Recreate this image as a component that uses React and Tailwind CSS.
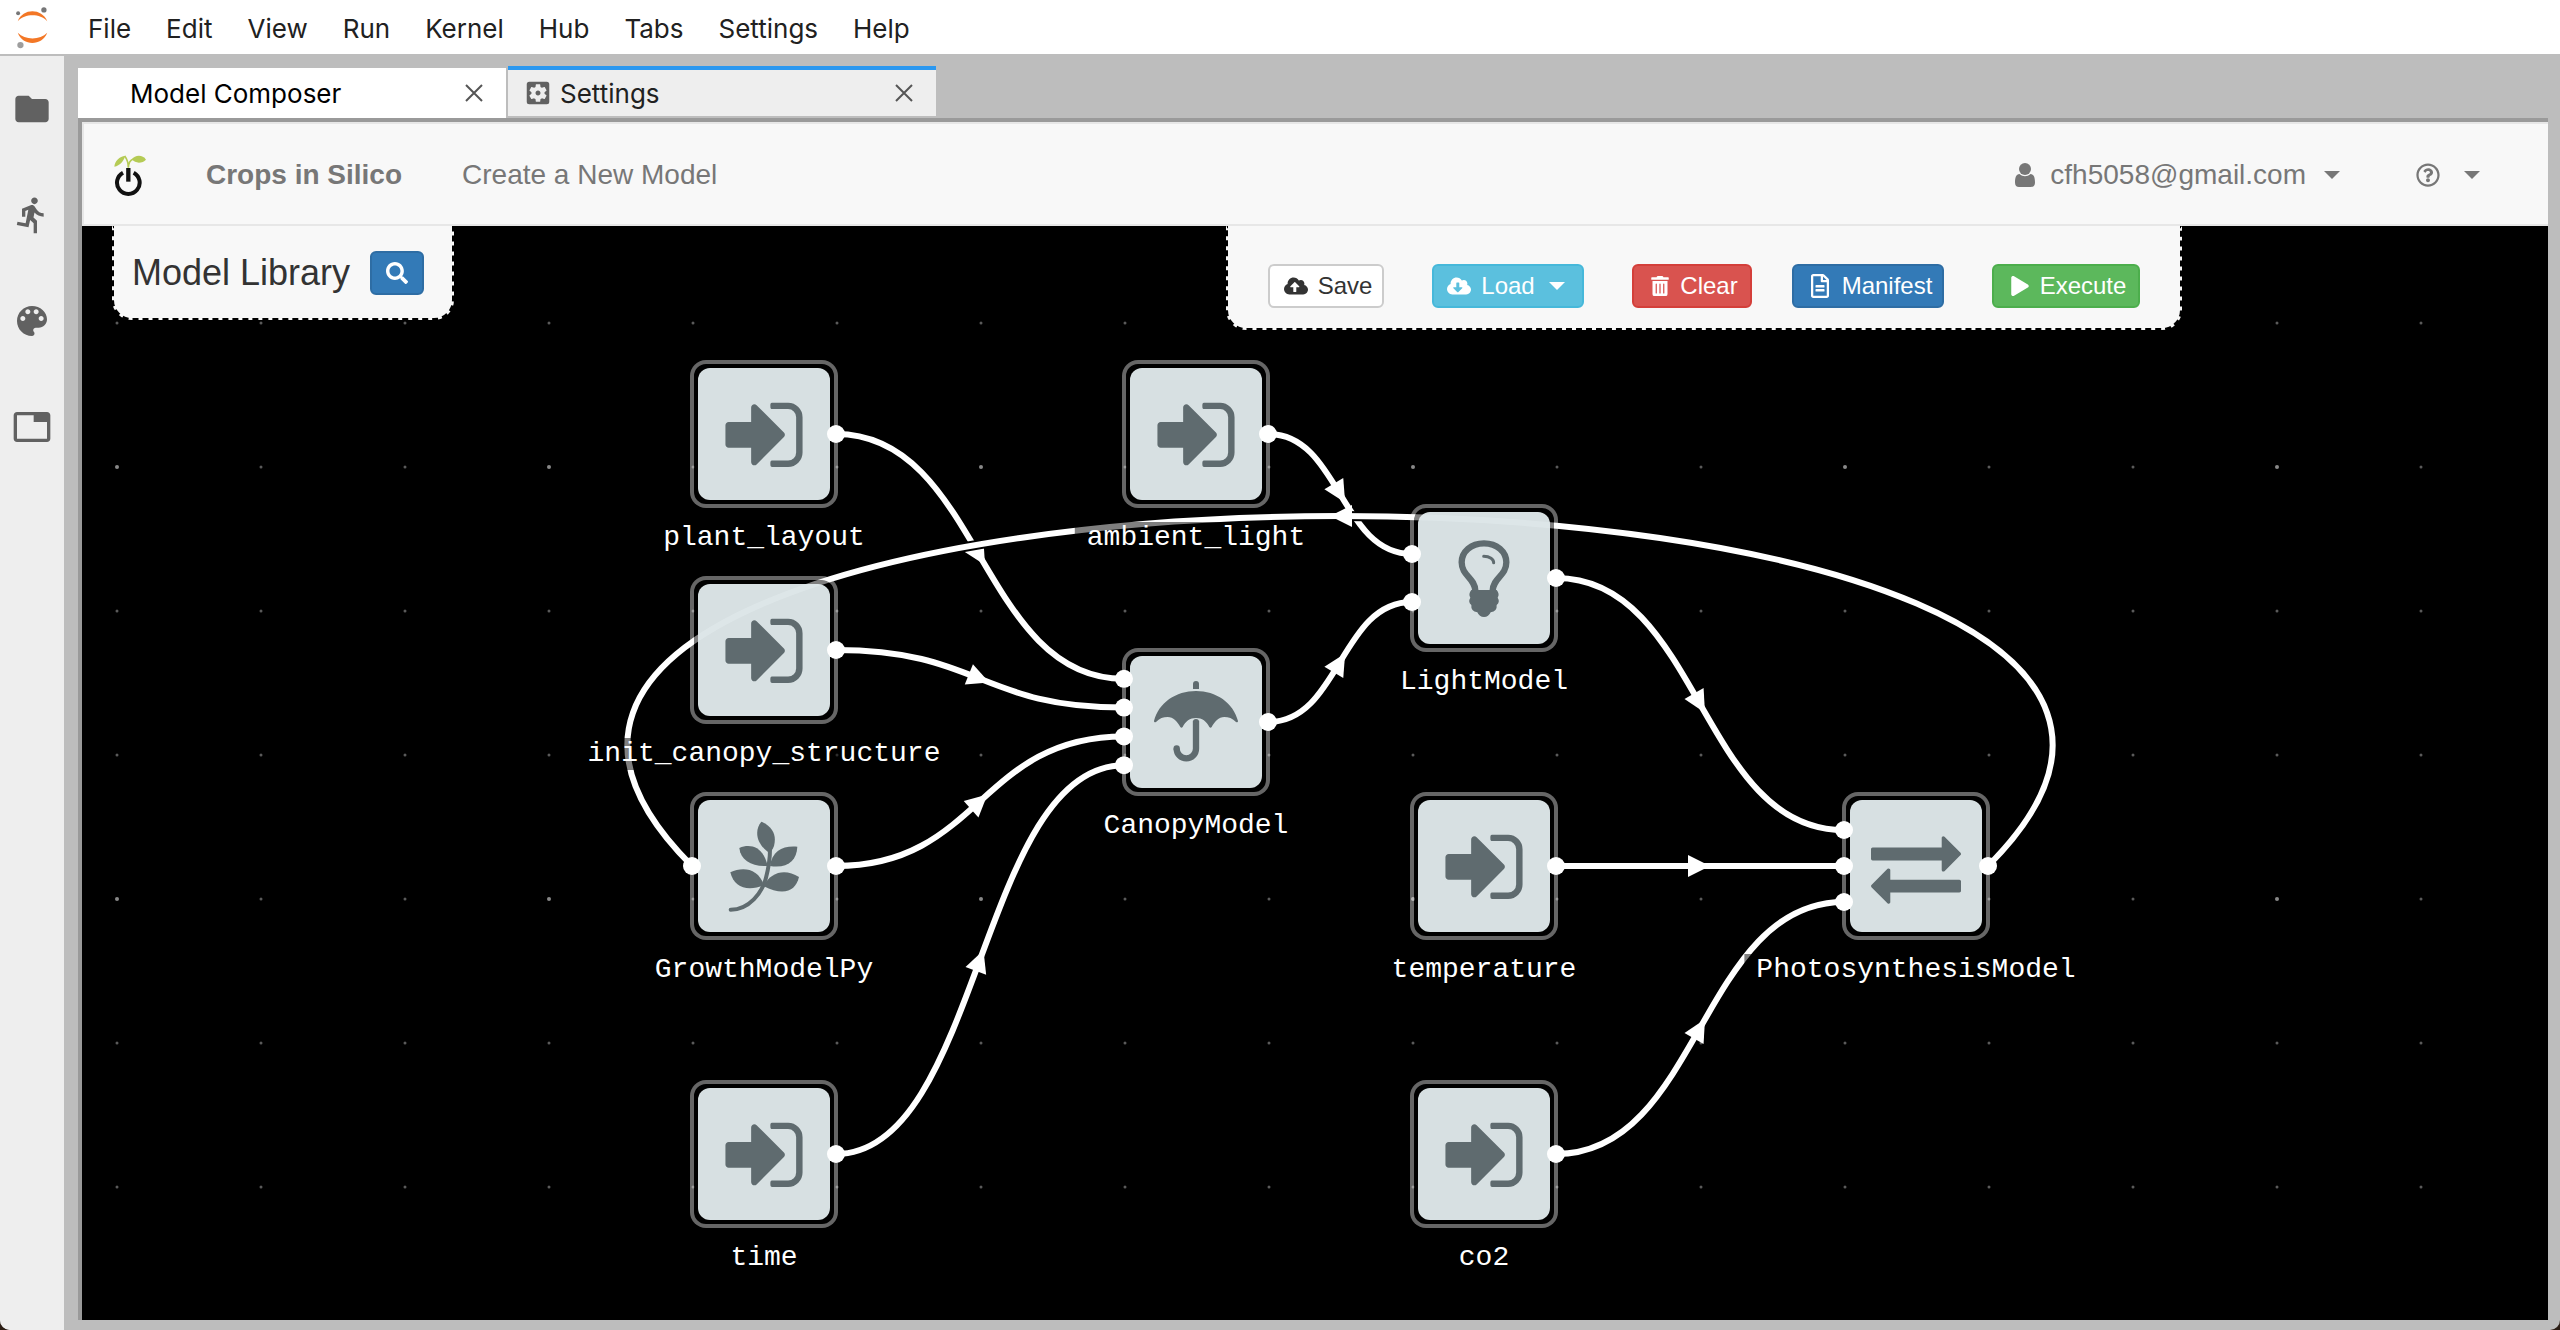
import React from "react";
import {
  FaCloudUploadAlt,
  FaCloudDownloadAlt,
  FaTrashAlt,
  FaRegFileAlt,
  FaPlay,
  FaSearch,
  FaRegQuestionCircle,
} from "react-icons/fa";
import { MdFolder, MdDirectionsRun, MdTab, MdSettingsApplications } from "react-icons/md";

const MENUS = ["File", "Edit", "View", "Run", "Kernel", "Hub", "Tabs", "Settings", "Help"];

const NODE = 144;

/* Top-left corner of each node on the canvas */
const NODES = [
  { id: "plant_layout", icon: "input", x: 610, y: 136, inputs: 0 },
  { id: "ambient_light", icon: "input", x: 1042, y: 136, inputs: 0 },
  { id: "init_canopy_structure", icon: "input", x: 610, y: 352, inputs: 0 },
  { id: "GrowthModelPy", icon: "leaf", x: 610, y: 568, inputs: 1 },
  { id: "time", icon: "input", x: 610, y: 856, inputs: 0 },
  { id: "CanopyModel", icon: "umbrella", x: 1042, y: 424, inputs: 4 },
  { id: "LightModel", icon: "bulb", x: 1330, y: 280, inputs: 2 },
  { id: "temperature", icon: "input", x: 1330, y: 568, inputs: 0 },
  { id: "co2", icon: "input", x: 1330, y: 856, inputs: 0 },
  { id: "PhotosynthesisModel", icon: "exchange", x: 1762, y: 568, inputs: 3 },
];

const EDGES = [
  ["plant_layout", "CanopyModel", 1],
  ["init_canopy_structure", "CanopyModel", 2],
  ["GrowthModelPy", "CanopyModel", 3],
  ["time", "CanopyModel", 4],
  ["ambient_light", "LightModel", 1],
  ["CanopyModel", "LightModel", 2],
  ["LightModel", "PhotosynthesisModel", 1],
  ["temperature", "PhotosynthesisModel", 2],
  ["co2", "PhotosynthesisModel", 3],
  ["PhotosynthesisModel", "GrowthModelPy", 1],
];

const byId = Object.fromEntries(NODES.map((n) => [n.id, n]));

function Edge({ from, to, port }) {
  const a = byId[from];
  const b = byId[to];
  const sx = a.x + NODE;
  const sy = a.y + NODE / 2;
  const tx = b.x;
  const ty = b.y + (NODE * port) / (b.inputs + 1);
  let c1 = [(sx + tx) / 2, sy];
  let c2 = [(sx + tx) / 2, ty];
  if (tx < sx) {
    const k = (sx - tx) * 0.36;
    c1 = [sx + k, sy - k];
    c2 = [tx - k, ty - k];
  }
  const mx = (sx + 3 * c1[0] + 3 * c2[0] + tx) / 8;
  const my = (sy + 3 * c1[1] + 3 * c2[1] + ty) / 8;
  const angle = (Math.atan2(ty + c2[1] - c1[1] - sy, tx + c2[0] - c1[0] - sx) * 180) / Math.PI;
  const d = `M${sx} ${sy}C${c1[0]} ${c1[1]} ${c2[0]} ${c2[1]} ${tx} ${ty}`;
  return (
    <g>
      <path d={d} fill="none" stroke="#000" strokeWidth="10" />
      <path d={d} fill="none" stroke="#fff" strokeWidth="6" />
      <path d="M-12 -11L10 0L-12 11Z" fill="#fff" transform={`translate(${mx} ${my}) rotate(${angle})`} />
    </g>
  );
}

function NodeIcon({ kind }) {
  if (kind === "leaf") {
    return (
      <svg viewBox="24 24 432 432" className="h-full w-full" fill="#5f6b6f">
        <path d="M140 371C195 371 235 320 246 275C254 245 258 220 258 190" fill="none" stroke="#5f6b6f" strokeWidth="12" strokeLinecap="round" />
        <path d="M232 107C213 128 213 170 251 197Q263 200 270 180C278 150 268 122 232 107Z" />
        <path d="M166 186C200 172 238 182 251 240C205 242 170 225 166 186Z" />
        <path d="M340 182C298 178 264 194 258 240C310 248 338 225 340 182Z" />
        <path d="M139 259C175 242 222 245 240 298C190 318 150 305 139 259Z" />
        <path d="M345 273C305 248 262 256 238 300C300 332 335 315 345 273Z" />
      </svg>
    );
  }
  if (kind === "umbrella") {
    return (
      <svg viewBox="24 24 432 432" className="h-full w-full" fill="#5f6b6f">
        <path d="M231 141V126A9 9 0 0 1 249 126V141Z" />
        <path d="M114 237C128 182 180 147 240 147C300 147 352 182 366 237Q366 243 360 240C350 229 337 225 325 225C308 225 296 239 287 255Q284 259 280 255C272 238 258 228 240 228C222 228 208 238 200 255Q196 259 193 255C184 239 172 225 155 225C142 225 130 229 120 240Q114 243 114 237Z" />
        <path d="M240 236V320A29 29 0 0 1 182 320" fill="none" stroke="#5f6b6f" strokeWidth="19" />
        <circle cx="240" cy="240" r="9" />
        <circle cx="182" cy="319" r="9.500" />
      </svg>
    );
  }
  if (kind === "bulb") {
    return (
      <svg viewBox="36 48 432 432" className="h-full w-full" fill="#5f6b6f">
        <path d="M226 302C224 262 185 258 185 217C185 185 213 160 252 160C291 160 319 185 319 217C319 258 280 262 278 302" fill="none" stroke="#5f6b6f" strokeWidth="19" />
        <path d="M251 199C270 199 281 208 281 218" fill="none" stroke="#5f6b6f" strokeWidth="9" strokeLinecap="round" />
        <path d="M214 300H290Q300 312 293 323Q301 336 290 345Q292 364 272 367Q266 381 252 381Q238 381 232 367Q212 364 214 345Q203 336 211 323Q204 312 214 300Z" />
      </svg>
    );
  }
  if (kind === "exchange") {
    return (
      <svg viewBox="-538 -554 2868 2868" className="h-full w-full" fill="#5f6b6f">
        <path d="M1792 1184v192q0 13-9.500 22.500t-22.500 9.500h-1376v192q0 13-9.500 22.500t-22.500 9.500q-12 0-24-10l-319-320q-9-9-9-22 0-14 9-23l320-320q9-9 23-9 13 0 22.500 9.500t9.500 22.500v192h1376q13 0 22.500 9.500t9.500 22.500zm0-544q0 14-9 23l-320 320q-9 9-23 9-13 0-22.500-9.500t-9.500-22.500v-192h-1376q-13 0-22.500-9.500t-9.500-22.500v-192q0-13 9.500-22.500t22.500-9.500h1376v-192q0-14 9-23t23-9q12 0 24 10l319 319q9 9 9 23z" />
      </svg>
    );
  }
  return (
    <svg viewBox="-538 -554 2868 2868" className="h-full w-full" fill="#5f6b6f">
      <path d="M1312 896q0 26-19 45l-544 544q-19 19-45 19t-45-19-19-45v-288h-448q-26 0-45-19t-19-45v-384q0-26 19-45t45-19h448v-288q0-26 19-45t45-19 45 19l544 544q19 19 19 45zm352-352v704q0 119-84.500 203.500t-203.500 84.500h-320q-13 0-22.500-9.500t-9.500-22.500q0-4-1-20t-.5-26.500 3-23.500 10-19.500 20.500-6.500h320q66 0 113-47t47-113v-704q0-66-47-113t-113-47h-312l-11.500-1-11.500-3-8-5.500-7-9-2-13.500q0-4-1-20t-.5-26.500 3-23.500 10-19.500 20.500-6.500h320q119 0 203.500 84.500t84.500 203.500z" />
    </svg>
  );
}

function GraphNode({ node }) {
  return (
    <div className="absolute h-36 w-36" style={{ left: node.x, top: node.y }}>
      <div className="absolute -inset-[2px] rounded-2xl border-4 border-white/40 bg-black/50 bg-clip-padding p-1">
        <div className="h-full w-full rounded-xl bg-[#e3ecee]/95" />
      </div>
      <div className="absolute inset-0">
        <NodeIcon kind={node.icon} />
      </div>
      <svg className="absolute inset-0 h-36 w-36 overflow-visible" fill="#fff">
        {Array.from({ length: node.inputs }, (_, i) => (
          <circle key={i} cx="0" cy={(NODE * (i + 1)) / (node.inputs + 1)} r="9" />
        ))}
        <circle cx={NODE} cy={NODE / 2} r="9" />
      </svg>
      <div className="absolute left-1/2 top-40 -translate-x-1/2 whitespace-nowrap bg-black/50 px-3 font-['Liberation_Mono',monospace] text-[28px] leading-8 text-white">
        {node.id}
      </div>
    </div>
  );
}

function GridDots() {
  const dots = [];
  for (let j = 0; j < 7; j++) {
    for (let i = 0; i < 17; i++) {
      const major = i % 3 === 0 && j % 3 === 1;
      dots.push(
        <circle key={`${i}-${j}`} cx={35 + i * 144} cy={97 + j * 144} r={major ? 2 : 1.5} fill={major ? "#888" : "#5a5a5a"} />
      );
    }
  }
  return <g>{dots}</g>;
}

function Caret({ className }) {
  return (
    <svg viewBox="0 0 16 8" className={`h-2 w-4 ${className || ""}`} fill="currentColor">
      <path d="M0 0H16L8 8Z" />
    </svg>
  );
}

function CloseIcon() {
  return (
    <svg viewBox="0 0 18 18" className="h-[18px] w-[18px]" fill="none" stroke="#555" strokeWidth="2">
      <path d="M1 1L17 17M17 1L1 17" />
    </svg>
  );
}

function JupyterLogo() {
  return (
    <svg viewBox="45 20 105 130" className="h-[43px] w-[35px]">
      <path d="M53 66C68 26 126 26 142 66C120 42 75 42 53 66Z" fill="#f37726" />
      <path d="M53 101C68 142 126 142 142 101C120 124 75 124 53 101Z" fill="#f37726" />
      <circle cx="132" cy="32" r="8" fill="#767677" />
      <circle cx="54" cy="42" r="6" fill="#767677" />
      <circle cx="61" cy="138" r="9.500" fill="#9e9e9e" />
    </svg>
  );
}

function CropsLogo() {
  return (
    <svg viewBox="342 466 96 123" className="h-[41px] w-8">
      <path d="M343 501C344 484 358 470 376 468C370 486 360 497 343 501Z" fill="#b5cb55" />
      <path d="M396 479C404 466 428 464 438 480C428 491 406 493 396 479Z" fill="#b5cb55" />
      <path d="M374 469C381 478 385 488 385 504C386 488 390 481 400 478" fill="none" stroke="#b5cb55" strokeWidth="5" />
      <path d="M369 519A34 34 0 1 0 401 519" fill="none" stroke="#111" strokeWidth="12" />
      <path d="M385 505V546" stroke="#111" strokeWidth="13" />
    </svg>
  );
}

function ToolButton({ className, icon, children }) {
  return (
    <button type="button" className={`flex h-11 items-center justify-center gap-[10px] rounded-md border-2 text-2xl leading-none ${className}`}>
      {icon}
      {children}
    </button>
  );
}

const SIDE_ITEMS = [
  { label: "Files", icon: <MdFolder className="h-10 w-10" /> },
  { label: "Running", icon: <MdDirectionsRun className="h-10 w-10" /> },
  {
    label: "Commands",
    icon: (
      <svg viewBox="0 0 24 24" className="h-10 w-10" fill="currentColor">
        <path d="M12 3c-4.970 0-9 4.030-9 9s4.030 9 9 9c.83 0 1.500-.67 1.500-1.500 0-.39-.15-.74-.39-1.010-.23-.26-.38-.61-.38-.99 0-.83.67-1.500 1.500-1.500H16c2.760 0 5-2.240 5-5 0-4.420-4.030-8-9-8zm-5.500 9c-.83 0-1.500-.67-1.500-1.500S5.670 9 6.500 9 8 9.670 8 10.500 7.330 12 6.500 12zm3-4C8.670 8 8 7.330 8 6.500S8.670 5 9.500 5s1.500.67 1.500 1.500S10.330 8 9.500 8zm5 0c-.83 0-1.500-.67-1.500-1.500S13.670 5 14.500 5s1.500.67 1.500 1.500S15.330 8 14.500 8zm3 4c-.83 0-1.500-.67-1.500-1.500S16.670 9 17.500 9s1.500.67 1.500 1.500-.67 1.500-1.500 1.500z" />
      </svg>
    ),
  },
  { label: "Tabs", icon: <MdTab className="h-10 w-10" /> },
];

export default function App() {
  return (
    <div className="h-screen bg-[#2b1d14] font-['Inter',sans-serif]">
      <div className="flex h-full flex-col overflow-hidden rounded-b-[10px] bg-[#bdbdbd]">
        <header className="flex h-14 shrink-0 items-center border-b-2 border-[#bdbdbd] bg-white pl-[15px]">
          <JupyterLogo />
          <nav className="ml-5 flex pt-1 text-[26px] leading-8 text-[#212121]">
            {MENUS.map((m) => (
              <button key={m} type="button" className="pl-[18px] pr-[17px]">
                {m}
              </button>
            ))}
          </nav>
        </header>

        <div className="flex min-h-0 flex-1">
          <aside className="flex w-16 shrink-0 flex-col bg-[#eee] text-[#616161]">
            {SIDE_ITEMS.map((s) => (
              <button key={s.label} type="button" aria-label={s.label} className="flex h-[106px] items-center justify-center">
                {s.icon}
              </button>
            ))}
          </aside>

          <main className="flex min-w-0 flex-1 flex-col pb-[10px] pl-[14px] pr-3 pt-[10px]">
            <div role="tablist" className="flex shrink-0 items-end gap-[2px] text-[26px] text-black">
              <div role="tab" aria-selected="true" className="flex h-[50px] w-[428px] items-center justify-between bg-white pl-[52px] pr-[23px]">
                <span>Model Composer</span>
                <button type="button" aria-label="Close Model Composer">
                  <CloseIcon />
                </button>
              </div>
              <div role="tab" aria-selected="false" className="mb-[2px] flex h-[50px] w-[428px] items-center border-t-4 border-[#2b98f0] bg-[#eee] pl-[15px] pr-[23px]">
                <MdSettingsApplications className="h-[30px] w-[30px] text-[#616161]" />
                <span className="ml-[7px] flex-1 text-[#212121]">Settings</span>
                <button type="button" aria-label="Close Settings">
                  <CloseIcon />
                </button>
              </div>
            </div>

            <section className="flex min-h-0 flex-1 flex-col border-l-4 border-t-4 border-[#9a9a9a] bg-black font-['Liberation_Sans',Arial,sans-serif]">
              <div className="flex h-[104px] shrink-0 items-center border-y-2 border-l-2 border-[#e7e7e7] bg-[#f8f8f8] pl-[30px] pr-[68px] pt-[2px] text-[28px] text-[#777]">
                <CropsLogo />
                <a href="#home" className="ml-[60px] font-bold">
                  Crops in Silico
                </a>
                <a href="#new" className="ml-[60px]">
                  Create a New Model
                </a>
                <button type="button" className="ml-auto flex items-center">
                  <svg viewBox="0 0 20 24" className="h-6 w-5" fill="currentColor">
                    <circle cx="10" cy="6" r="6" />
                    <path d="M4.500 11C8 14 12 14 15.500 11C19 11 20 15 20 19.500C20 22.500 18.500 24 16 24H4C1.500 24 0 22.500 0 19.500C0 15 1 11 4.500 11Z" />
                  </svg>
                  <span className="ml-[15px]">cfh5058@gmail.com</span>
                  <Caret className="ml-[18px]" />
                </button>
                <button type="button" aria-label="Help" className="ml-[76px] flex items-center">
                  <FaRegQuestionCircle className="h-6 w-6" />
                  <Caret className="ml-6" />
                </button>
              </div>

              <div className="relative min-h-0 flex-1 overflow-hidden">
                <svg className="absolute inset-0 h-full w-full">
                  <GridDots />
                  {EDGES.map(([from, to, port]) => (
                    <Edge key={from + to} from={from} to={to} port={port} />
                  ))}
                </svg>
                {NODES.map((n) => (
                  <GraphNode key={n.id} node={n} />
                ))}

                <div className="absolute left-[30px] top-0 flex h-[94px] items-center gap-5 rounded-b-[20px] border-2 border-t-0 border-dashed border-black bg-[#f8f8f8] pl-[18px] pr-7 pt-[2px]">
                  <h1 className="text-[36px] leading-10 text-[#333]">Model Library</h1>
                  <button type="button" aria-label="Search models" className="flex h-11 w-[54px] items-center justify-center rounded-md border-2 border-[#2e6da4] bg-[#337ab7] text-white">
                    <FaSearch className="h-[22px] w-[22px]" />
                  </button>
                </div>

                <div className="absolute right-[366px] top-0 flex h-[104px] items-end rounded-b-[20px] border-2 border-t-0 border-dashed border-black bg-[#f8f8f8] px-10 pb-5">
                  <ToolButton className="mr-12 w-[116px] border-[#ccc] bg-white pl-1 text-[#333]" icon={<FaCloudUploadAlt className="h-6 w-6" />}>
                    Save
                  </ToolButton>
                  <ToolButton className="mr-12 w-[152px] border-[#46b8da] bg-[#5bc0de] pr-1 text-white" icon={<FaCloudDownloadAlt className="h-6 w-6" />}>
                    Load
                    <Caret className="ml-1" />
                  </ToolButton>
                  <ToolButton className="mr-10 w-[120px] border-[#d43f3a] bg-[#d9534f] pl-1 text-white" icon={<FaTrashAlt className="h-5 w-5" />}>
                    Clear
                  </ToolButton>
                  <ToolButton className="mr-12 w-[152px] border-[#2e6da4] bg-[#337ab7] pl-1 text-white" icon={<FaRegFileAlt className="h-6 w-6" />}>
                    Manifest
                  </ToolButton>
                  <ToolButton className="w-[148px] border-[#4cae4c] bg-[#5cb85c] pl-1 text-white" icon={<FaPlay className="h-5 w-5" />}>
                    Execute
                  </ToolButton>
                </div>
              </div>
            </section>
          </main>
        </div>
      </div>
    </div>
  );
}
